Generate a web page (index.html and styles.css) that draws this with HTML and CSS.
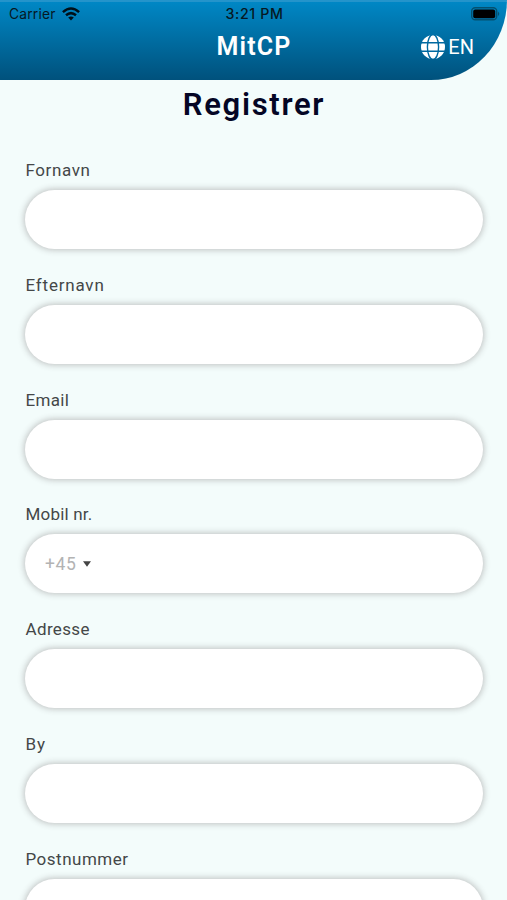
FILE: index.html
```html
<!DOCTYPE html>
<html lang="da">
<head>
<meta charset="utf-8">
<title>MitCP</title>
<link rel="stylesheet" href="styles.css">
</head>
<body>
<header class="header">
  <div class="status">
    <div class="carrier"><span>Carrier</span>
      <svg class="wifi" viewBox="0 0 18 14"><g fill="none" stroke="currentColor" stroke-width="2.5"><path d="M.9 5.1Q9-2 17.1 5.1"/><path d="M4 8.3Q9 4 14 8.3"/></g><path d="M6.2 10.5Q9 8.3 11.8 10.5L9 13.5Z" fill="currentColor"/></svg>
    </div>
    <time class="time">3:21 PM</time>
    <svg class="battery" viewBox="0 0 29 14"><rect x=".7" y=".7" width="25" height="12" rx="3.5" fill="none" stroke="#04506f" stroke-width="1.4"/><rect x="2.2" y="2.5" width="22" height="8.7" rx="2"/><path d="M27 4.5q2.5 2.3 0 4.6z" fill="#04506f"/></svg>
  </div>
  <div class="titlebar">
    <div class="brand">MitCP</div>
    <div class="language">
      <svg class="globe" viewBox="0 0 24 24"><circle cx="12" cy="12" r="12" fill="#fff"/><g fill="none" stroke="#0069a0" stroke-width="1.4"><ellipse cx="12" cy="12" rx="5.6" ry="12.5"/><path d="M0 7.7H24M0 16.3H24"/></g></svg>
      <span>EN</span>
    </div>
  </div>
</header>
<main>
  <h1 class="heading">Registrer</h1>
  <form class="form">
    <label class="field"><span class="label first">Fornavn</span><span class="box"></span></label>
    <label class="field"><span class="label last">Efternavn</span><span class="box"></span></label>
    <label class="field"><span class="label email">Email</span><span class="box"></span></label>
    <label class="field"><span class="label mobile">Mobil nr.</span><span class="box"><span class="prefix">+45</span><svg class="caret" viewBox="0 0 8 6"><path d="M0 .3H8L4 5.7Z" fill="#444"/></svg></span></label>
    <label class="field"><span class="label address">Adresse</span><span class="box"></span></label>
    <label class="field"><span class="label city">By</span><span class="box"></span></label>
    <label class="field"><span class="label postal">Postnummer</span><span class="box"></span></label>
  </form>
</main>
</body>
</html>
```
FILE: styles.css
```css
* { box-sizing: border-box; }
body {
  margin: 0;
  height: 900px;
  overflow: hidden;
  background: #f3fcfb;
  font-family: Roboto, sans-serif;
  color: #444748;
}
.header {
  height: 80px;
  border-top: 2px solid #2494cb;
  border-bottom-right-radius: 76px 80px;
  background: linear-gradient(#0087c5, #00517c);
  overflow: hidden;
}
main { height: 820px; overflow: hidden; }
.status {
  display: grid;
  grid-template-columns: 1fr auto 1fr;
  align-items: center;
  height: 24px;
  padding: 0 7px 0 9px;
  color: #061823;
  font: 13.8px Inter, sans-serif;
}
.carrier { display: flex; align-items: center; gap: 6px; letter-spacing: .2px; }
.wifi { width: 18px; height: 14px; color: #001019; }
.time { padding-bottom: 2px; font-weight: 500; font-size: 14.2px; letter-spacing: .6px; }
.battery { width: 29px; height: 14px; justify-self: end; }
.titlebar {
  display: grid;
  grid-template-columns: 1fr auto 1fr;
  align-items: center;
  height: 41px;
  padding: 0 33px;
  color: #fff;
}
.brand { grid-column: 2; padding-left: 1px; font-size: 25px; font-weight: 600; letter-spacing: 1.2px; }
.language { display: flex; justify-content: flex-end; align-items: center; gap: 3px; font-size: 20px; }
.globe { width: 24px; height: 24px; }
.heading {
  margin: 0;
  height: 79px;
  padding: 7px 0 0 1px;
  text-align: center;
  font-size: 31px;
  font-weight: 600;
  line-height: 36px;
  letter-spacing: 1.7px;
  color: #040625;
}
.form { padding: 0 24px 0 25px; }
.field { display: flex; flex-direction: column; height: 114.8px; }
.label { height: 31px; padding-left: .5px; line-height: 22.5px; font-size: 17px; letter-spacing: .5px; }
.first { letter-spacing: .6px; }
.last { letter-spacing: .8px; }
.email { letter-spacing: .35px; }
.mobile { letter-spacing: .2px; }
.address { letter-spacing: .35px; }
.city { letter-spacing: .8px; }
.box {
  display: flex;
  flex: none;
  align-items: center;
  gap: 7px;
  height: 59px;
  padding: 1px 20px 0;
  border-radius: 30px;
  background: #fff;
  box-shadow: 0 0 6px 1px rgba(65, 55, 60, .3);
}
.prefix { color: #b3b3b3; font-size: 17.5px; letter-spacing: .6px; }
.caret { width: 8px; height: 6px; }
```
